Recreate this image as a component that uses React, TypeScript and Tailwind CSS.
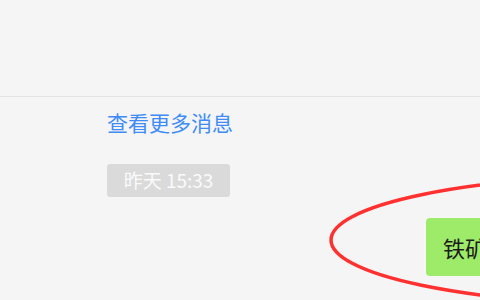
export default function App() {
  return (
    <div
      className="relative w-[480px] h-[300px] overflow-hidden bg-[#f5f5f5]"
      style={{ fontFamily: '"Noto Sans CJK SC", "Noto Sans", sans-serif' }}
    >
      <div className="h-[97px] border-b border-[#e3e3e3]" />

      <div className="pl-[107px] pt-[13px]">
        <div className="text-[21px] leading-[25px] text-[#3f8cf6]">查看更多消息</div>
        <div className="mt-[29px] inline-flex h-[33px] w-[123px] items-center justify-center rounded-[3px] bg-[#dadada] text-[19px] text-[#fafafa]">
          昨天 15:33
        </div>
      </div>

      <div className="mt-[21px] flex pl-[426px]">
        <div className="flex h-[58px] w-[200px] shrink-0 items-center whitespace-nowrap rounded-[4px] bg-[#9deb69] pl-[17px] text-[22px] text-[#1b1b1b]">
          铁矿石价格
        </div>
      </div>

      {/* red annotation circle */}
      <svg className="pointer-events-none absolute left-0 top-0" width="480" height="300">
        <ellipse cx="640" cy="240" rx="309" ry="64" fill="none" stroke="#ff3030" strokeWidth="3.5" />
      </svg>
    </div>
  );
}
